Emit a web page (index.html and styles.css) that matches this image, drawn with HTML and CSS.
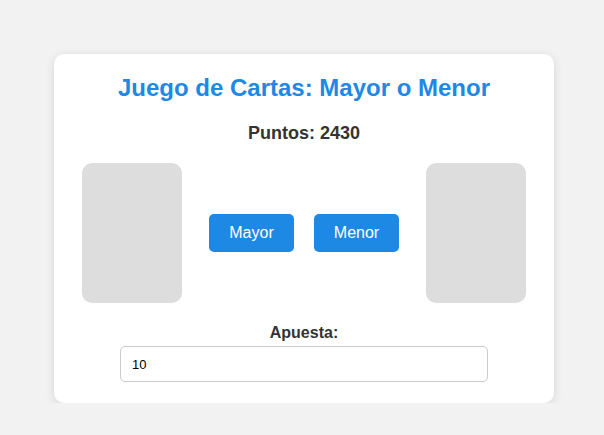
FILE: index.html
```html
<!DOCTYPE html>
<html lang="es">
<head>
<meta charset="utf-8">
<title>Juego de Cartas</title>
<link rel="stylesheet" href="styles.css">
</head>
<body>
<div class="game">
  <h1 class="title">Juego de Cartas: Mayor o Menor</h1>
  <div class="score">Puntos: 2430</div>
  <div class="table">
    <div class="card"></div>
    <div class="actions">
      <button class="btn">Mayor</button>
      <button class="btn">Menor</button>
    </div>
    <div class="card"></div>
  </div>
  <div class="bet">
    <label class="bet-label" for="bet">Apuesta:</label>
    <input class="bet-input" id="bet" type="number" value="10">
  </div>
</div>
</body>
</html>
```

FILE: styles.css
```css
html, body {
  margin: 0;
  padding: 0;
  background: #f2f2f2;
  font-family: "Liberation Sans", Arial, sans-serif;
  color: #333;
}
body {
  padding: 54px 0 0 54px;
}
.game {
  box-sizing: border-box;
  width: 500px;
  background: #fff;
  border-radius: 10px;
  box-shadow: 0 2px 10px rgba(0, 0, 0, 0.12);
  padding: 20px 20px 21px;
  text-align: center;
}
.title {
  margin: 0;
  font-size: 24px;
  line-height: 28px;
  color: #1e88e5;
  font-weight: bold;
}
.score {
  margin-top: 21px;
  font-size: 18px;
  line-height: 21px;
  font-weight: bold;
}
.table {
  display: flex;
  justify-content: space-between;
  align-items: center;
  margin-top: 19px;
  padding: 0 8px;
}
.card {
  width: 100px;
  height: 140px;
  background: #ddd;
  border-radius: 10px;
}
.actions {
  display: flex;
  gap: 20px;
}
.btn {
  width: 85px;
  height: 38px;
  border: none;
  border-radius: 5px;
  background: #1e88e5;
  color: #fff;
  font-family: "Liberation Sans", Arial, sans-serif;
  font-size: 16px;
  padding: 0;
}
.bet {
  margin-top: 21px;
  display: flex;
  flex-direction: column;
  align-items: center;
}
.bet-label {
  font-size: 16px;
  line-height: 18px;
  font-weight: bold;
}
.bet-input {
  box-sizing: border-box;
  margin-top: 4px;
  width: 368px;
  height: 36px;
  border: 1px solid #ccc;
  border-radius: 5px;
  padding: 0 11px;
  font-family: "Liberation Sans", Arial, sans-serif;
  font-size: 13px;
  color: #000;
  -moz-appearance: textfield;
}
.bet-input::-webkit-outer-spin-button,
.bet-input::-webkit-inner-spin-button {
  -webkit-appearance: none;
  margin: 0;
}
```
